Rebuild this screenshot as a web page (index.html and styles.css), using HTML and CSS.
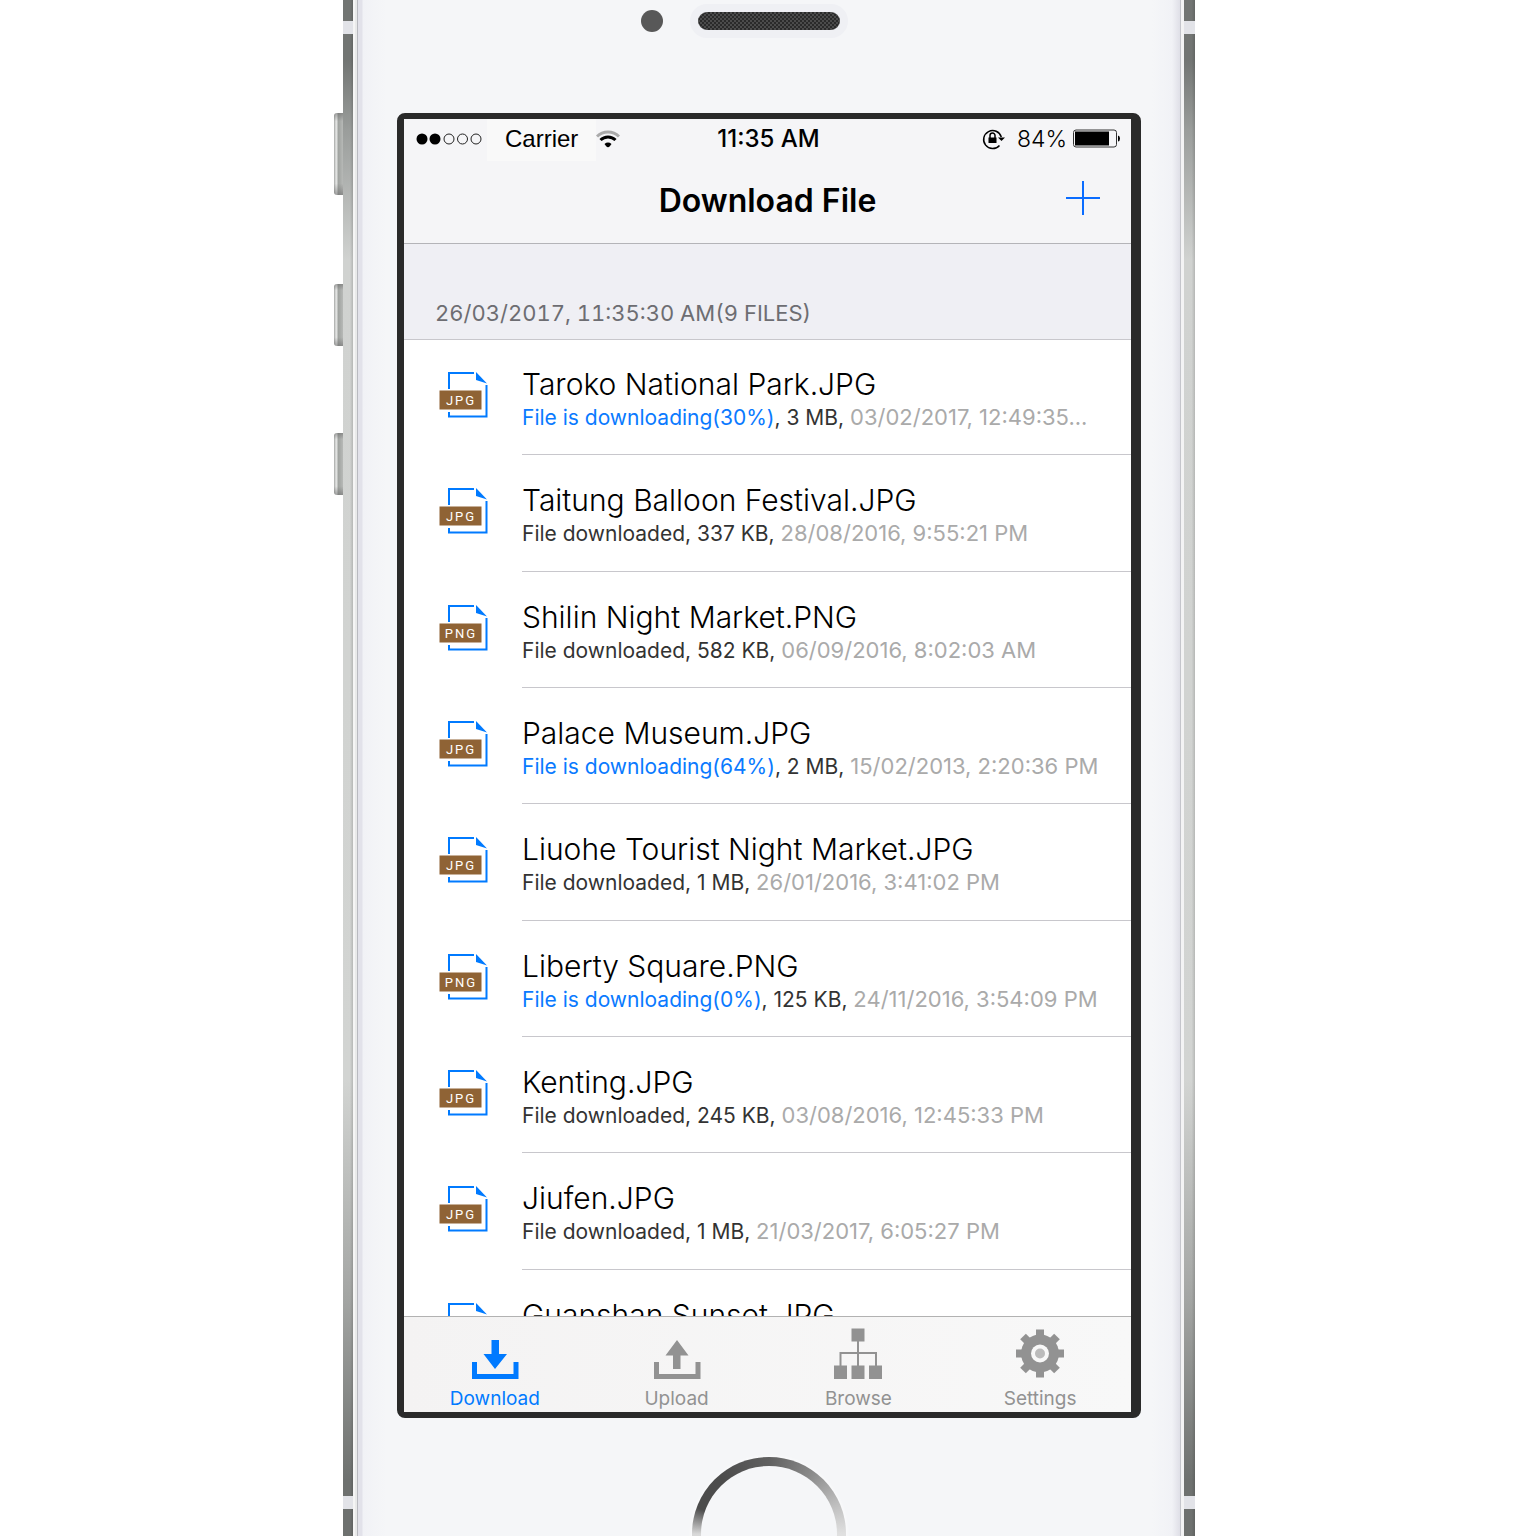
FILE: index.html
```html
<!DOCTYPE html>
<html lang="en">
<head>
<meta charset="utf-8">
<meta name="viewport" content="width=device-width, initial-scale=1">
<title>Download File</title>
<link rel="stylesheet" href="styles.css">
</head>
<body>
<svg class="sprite" aria-hidden="true">
  <symbol id="file" viewBox="0 0 50 48">
    <path class="file-line" d="M10 18V2H35M47.500 14V45.500H10V41"/>
    <path class="file-fold" d="M37 1V9L48 12.500Z"/>
    <rect class="file-tag" x="0.500" y="19.500" width="42" height="19"/>
  </symbol>
</svg>
<div class="phone">
  <div class="rail rail-left">
    <span class="key key-mute"></span><span class="key key-up"></span><span class="key key-down"></span>
  </div>
  <div class="bevel bevel-left"></div>
  <div class="face">
    <div class="top">
      <span class="camera"></span>
      <span class="speaker"></span>
    </div>
    <main class="screen">
      <header class="bar">
        <div class="status">
          <div class="status-side">
            <svg class="signal" viewBox="0 0 66 12" aria-label="Signal"><g class="signal-on"><circle cx="6" cy="6" r="5.500"/><circle cx="19" cy="6" r="5.500"/></g><g class="signal-off"><circle cx="33" cy="6" r="5"/><circle cx="46.500" cy="6" r="5"/><circle cx="60" cy="6" r="5"/></g></svg>
            <span class="carrier">Carrier</span>
            <svg class="wifi" viewBox="0 0 24 18" aria-label="Wi-Fi"><path class="wifi-off" d="M1 6.500A15.500 15.500 0 0 1 23 6.500"/><path class="wifi-on" d="M4.500 10A10.600 10.600 0 0 1 19.500 10"/><path d="M8.500 14A5.500 5.500 0 0 1 15.500 14L14 16Q12 18.500 10 16Z"/></svg>
          </div>
          <time class="clock">11:35 AM</time>
          <div class="status-side status-end">
            <svg class="lock" viewBox="0 0 24 22" aria-label="Orientation lock"><path class="lock-ring" d="M17.500 17.400A9 9 0 1 1 19.300 9"/><path d="M16 9.500H23L19.500 13Z"/><rect x="6.500" y="9.500" width="8" height="5.500"/><path class="lock-ring" d="M8 10V7.500A2.500 2.500 0 0 1 13 7.500V10"/></svg>
            <span class="percent">84%</span>
            <svg class="battery" viewBox="0 0 48 20" aria-label="Battery"><rect class="battery-case" x="0.500" y="1" width="43" height="17" rx="2.500"/><rect x="2" y="2.500" width="34" height="14"/><path d="M45 6.500Q47 7 47 9.500T45 12.500Z"/></svg>
          </div>
        </div>
        <div class="nav">
          <h1 class="title">Download File</h1>
          <button class="add" type="button" aria-label="Add"><svg viewBox="0 0 34 34"><path d="M0 17H34M17 0V34"/></svg></button>
        </div>
      </header>
      <section class="content">
        <h2 class="group">26/03/2017, 11:35:30 AM(9 FILES)</h2>
        <ul class="files">
          <li class="row"><span class="icon"><svg><use href="#file"/></svg><b class="ext">JPG</b></span><div class="info"><p class="name">Taroko National Park.JPG</p><p class="meta"><span class="busy">File is downloading(30%)</span>, 3 MB, <time>03/02/2017, 12:49:35...</time></p></div></li>
          <li class="row"><span class="icon"><svg><use href="#file"/></svg><b class="ext">JPG</b></span><div class="info"><p class="name">Taitung Balloon Festival.JPG</p><p class="meta">File downloaded, 337 KB, <time>28/08/2016, 9:55:21 PM</time></p></div></li>
          <li class="row"><span class="icon"><svg><use href="#file"/></svg><b class="ext">PNG</b></span><div class="info"><p class="name">Shilin Night Market.PNG</p><p class="meta">File downloaded, 582 KB, <time>06/09/2016, 8:02:03 AM</time></p></div></li>
          <li class="row"><span class="icon"><svg><use href="#file"/></svg><b class="ext">JPG</b></span><div class="info"><p class="name">Palace Museum.JPG</p><p class="meta"><span class="busy">File is downloading(64%)</span>, 2 MB, <time>15/02/2013, 2:20:36 PM</time></p></div></li>
          <li class="row"><span class="icon"><svg><use href="#file"/></svg><b class="ext">JPG</b></span><div class="info"><p class="name">Liuohe Tourist Night Market.JPG</p><p class="meta">File downloaded, 1 MB, <time>26/01/2016, 3:41:02 PM</time></p></div></li>
          <li class="row"><span class="icon"><svg><use href="#file"/></svg><b class="ext">PNG</b></span><div class="info"><p class="name">Liberty Square.PNG</p><p class="meta"><span class="busy">File is downloading(0%)</span>, 125 KB, <time>24/11/2016, 3:54:09 PM</time></p></div></li>
          <li class="row"><span class="icon"><svg><use href="#file"/></svg><b class="ext">JPG</b></span><div class="info"><p class="name">Kenting.JPG</p><p class="meta">File downloaded, 245 KB, <time>03/08/2016, 12:45:33 PM</time></p></div></li>
          <li class="row"><span class="icon"><svg><use href="#file"/></svg><b class="ext">JPG</b></span><div class="info"><p class="name">Jiufen.JPG</p><p class="meta">File downloaded, 1 MB, <time>21/03/2017, 6:05:27 PM</time></p></div></li>
          <li class="row"><span class="icon"><svg><use href="#file"/></svg></span><div class="info"><p class="name">Guanshan Sunset.JPG</p></div></li>
        </ul>
      </section>
      <nav class="tabs">
        <a class="tab tab-active" href="#download"><svg viewBox="0 0 50 52"><path d="M21.500 12H29V26H37L25 41L13.500 26H21.500ZM2 34H7V46H43.500V34H48.500V51H2Z"/></svg>Download</a>
        <a class="tab" href="#upload"><svg viewBox="0 0 50 52"><path d="M25 12L36.500 27.500H28.500V41H21V27.500H13.500ZM2 34H7V46H43.500V34H48.500V51H2Z"/></svg>Upload</a>
        <a class="tab" href="#browse"><svg viewBox="0 0 50 52"><path d="M18.500 0.500H31.500V13.500H18.500ZM1 37.500H14V51H1ZM18.500 37.500H31.500V51H18.500ZM36 37.500H49V51H36Z"/><path class="wire" d="M25 13V38M7.500 38V25H43V38"/></svg>Browse</a>
        <a class="tab" href="#settings"><svg viewBox="0 0 50 52"><g transform="translate(25 25.500)"><circle r="19"/><rect x="-4" y="-24" width="8" height="48"/><rect x="-24" y="-4" width="48" height="8"/><g transform="rotate(45)"><rect x="-4" y="-24" width="8" height="48"/><rect x="-24" y="-4" width="48" height="8"/></g><circle class="hub" r="9"/><circle class="pin" r="5"/></g></svg>Settings</a>
      </nav>
    </main>
    <div class="bottom">
      <button class="home" type="button" aria-label="Home"></button>
    </div>
  </div>
  <div class="bevel bevel-right"></div>
  <div class="rail rail-right"></div>
</div>
</body>
</html>
```
FILE: styles.css
```css
* {
  box-sizing: border-box;
}

body {
  margin: 0;
  padding-left: 2px;
  background: #fff;
  color: #000;
  font-family: Inter, "Liberation Sans", sans-serif;
}

h1, h2, p, ul {
  margin: 0;
  padding: 0;
  font-weight: 400;
}

svg {
  display: block;
}

.sprite {
  position: absolute;
  width: 0;
  height: 0;
}

/* Phone body */

.phone {
  display: flex;
  height: 100vh;
  max-width: 852px;
  margin: 0 auto;
}

.rail {
  position: relative;
  flex: none;
  width: 10px;
  background:
    linear-gradient(#e2e3e8, #e2e3e8) 0 21px / 100% 13px no-repeat,
    linear-gradient(#e2e3e8, #e2e3e8) 0 calc(100% - 27px) / 100% 13px no-repeat,
    linear-gradient(90deg, #0000 70%, #0002),
    linear-gradient(#727573, #727573 60px, #9a9d9b 130px, #d0d2d0 260px, #d2d4d2 1080px, #a3a5a3 1300px, #6e716f 1480px);
}

.rail-right {
  width: 11px;
}

.bevel {
  flex: none;
  width: 5px;
  background: linear-gradient(90deg, #f5f5f5 0 2px, #e9eaea 2px 4px, #b9bac0 4px);
}

.bevel-right {
  width: 4px;
  background: linear-gradient(90deg, #c4c5cb 0 1px, #f3f3f4 1px);
}

.key {
  position: absolute;
  left: -9px;
  width: 9px;
  height: 62px;
  border-radius: 3px 0 0 3px;
  background: linear-gradient(#6668, #fff0 10% 86%, #6668), linear-gradient(90deg, #a5a7a5, #e9eae9 25%, #a0a3a0 50%, #b7b9b7);
}

.key-mute {
  top: 113px;
  height: 82px;
}

.key-up {
  top: 284px;
}

.key-down {
  top: 433px;
}

.face {
  display: flex;
  flex: 1;
  flex-direction: column;
  min-width: 0;
  padding: 0 39px;
  background: linear-gradient(90deg, #e2e2ea 0 4px, #f1f2f6 5px, #f5f6f8 28px calc(100% - 28px), #f1f2f6 calc(100% - 8px), #dfdfe7);
}

.top {
  display: flex;
  flex: none;
  gap: 27px;
  height: 113px;
  padding: 4px 0 0 244px;
}

.camera {
  width: 22px;
  height: 22px;
  margin-top: 6px;
  border-radius: 50%;
  background: #585858;
}

.speaker {
  width: 158px;
  height: 34px;
  border: 8px solid #eff0f4;
  border-radius: 17px;
  background: repeating-conic-gradient(#2a2a2a 0 25%, #4b4b4b 0 50%) 0 0 / 4px 4px;
}

.bottom {
  display: flex;
  flex: none;
  justify-content: center;
  height: 118px;
  padding-top: 39px;
  overflow: hidden;
}

.home {
  flex: none;
  width: 154px;
  height: 154px;
  padding: 0;
  border: 9px solid transparent;
  border-radius: 50%;
  background:
    linear-gradient(#f5f6f8, #f5f6f8) padding-box,
    conic-gradient(#606060, #8a8a8a 35deg, #bcbcbc 65deg, #e0e0e0 90deg, #e0e0e0 260deg, #d8d8d8 270deg, #4c4c4c 290deg, #4c4c4c 320deg, #606060) border-box;
  box-shadow: 0 0 4px #fff;
}

/* Screen */

.screen {
  display: flex;
  flex: 1;
  flex-direction: column;
  min-height: 0;
  border: solid #2a2a2a;
  border-width: 6px 10px 6px 7px;
  border-radius: 8px;
  background: #fff;
}

.bar {
  flex: none;
  border-bottom: 1px solid #b4b4b8;
  background: #f5f5f7;
}

.status {
  display: flex;
  justify-content: space-between;
  height: 42px;
  padding: 0 10px 0 12px;
  font-size: 23px;
  line-height: 40px;
}

.status-side {
  display: flex;
  flex: 1;
}

.status-end {
  justify-content: flex-end;
}

.signal {
  width: 66px;
  height: 12px;
  margin-top: 14px;
}

.signal-off {
  fill: none;
  stroke: #222;
}

.carrier {
  margin-left: 5px;
  padding: 0 18px;
  background: #f9f9f9;
  font-family: "Liberation Sans", sans-serif;
  font-size: 24px;
}

.wifi {
  width: 24px;
  height: 18px;
  margin-top: 11px;
}

.wifi-on,
.wifi-off {
  fill: none;
  stroke: #000;
  stroke-width: 3;
}

.wifi-off {
  stroke: #aaa;
}

.clock {
  font-size: 24px;
  font-weight: 500;
}

.lock {
  width: 24px;
  height: 22px;
  margin: 9px 11px 0 0;
}

.lock-ring {
  fill: none;
  stroke: #000;
  stroke-width: 1.5;
}

.percent {
  margin-right: 6px;
  font-weight: 300;
}

.battery {
  width: 48px;
  height: 20px;
  margin-top: 10px;
}

.battery-case {
  fill: none;
  stroke: #333;
}

.nav {
  display: grid;
  grid-template-columns: 1fr auto 1fr;
  align-items: center;
  height: 82px;
  padding: 0 31px;
}

.title {
  grid-column: 2;
  padding-bottom: 2px;
  font-size: 32px;
  font-weight: 600;
  line-height: 78px;
}

.add {
  justify-self: end;
  width: 34px;
  height: 34px;
  margin-bottom: 8px;
  padding: 0;
  border: 0;
  background: none;
}

.add path {
  stroke: #0a6cff;
  stroke-width: 2;
}

.content {
  flex: 1;
  min-height: 0;
  overflow: hidden;
}

.group {
  height: 96px;
  padding: 53px 31px 0;
  border-bottom: 1px solid #c8c7cc;
  background: #efeff4;
  color: #6d6d72;
  font-size: 22px;
  font-variant-numeric: tabular-nums;
  line-height: 32px;
}

.files {
  display: grid;
  grid-template-rows: repeat(9, 1fr);
  height: 1047px;
  margin-top: -1px;
  list-style: none;
}

.row {
  display: flex;
  padding-left: 35px;
}

.icon {
  display: grid;
  width: 50px;
  height: 48px;
  margin: 32px 33px 0 0;
}

.icon svg {
  grid-area: 1 / 1;
  width: 50px;
  height: 48px;
}

.file-line {
  fill: none;
  stroke: #007aff;
  stroke-width: 2;
}

.file-fold {
  fill: #007aff;
}

.file-tag {
  fill: #8f6335;
}

.ext {
  grid-area: 1 / 1;
  z-index: 1;
  width: 44px;
  padding-top: 20px;
  color: #fff;
  font-family: Roboto, sans-serif;
  font-size: 13px;
  font-weight: 400;
  letter-spacing: 2px;
  line-height: 19px;
  text-align: center;
}

.info {
  flex: 1;
  min-width: 0;
  padding-top: 28px;
  border-bottom: 1px solid #c8c7cc;
  white-space: nowrap;
}

.name {
  margin-bottom: 1px;
  font-size: 30px;
  font-weight: 350;
  line-height: 34px;
}

.meta {
  color: #333;
  font-size: 21px;
  line-height: 30px;
}

.meta time {
  color: #aaa;
  font-size: 22px;
}

.busy {
  color: #0a7aff;
}

/* Tab bar */

.tabs {
  display: grid;
  flex: none;
  grid-template-columns: repeat(4, 1fr);
  height: 96px;
  border-top: 1px solid #b2b2b2;
  background: linear-gradient(90deg, #f4f3f3, #f8f8f8);
}

.tab {
  display: flex;
  flex-direction: column;
  align-items: center;
  padding-top: 11px;
  color: #929292;
  font-size: 19px;
  line-height: 38px;
  text-decoration: none;
}

.tab svg {
  flex: none;
  width: 50px;
  height: 52px;
  fill: currentColor;
}

.tab-active {
  color: #007aff;
}

.tab .wire {
  fill: none;
  stroke: currentColor;
  stroke-width: 2;
}

.tab .hub {
  fill: #f8f8f8;
}

.tab .pin {
  fill: #bbb;
}
```
